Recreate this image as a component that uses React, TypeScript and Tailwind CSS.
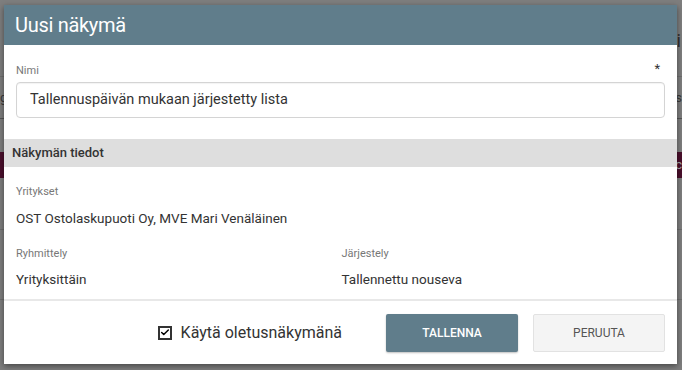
import { Check } from 'lucide-react'

export default function App() {
  return (
    <div
      className="relative w-[682px] h-[370px] overflow-hidden bg-[#7e7e7e]"
      style={{ fontFamily: 'Roboto, "Noto Sans", sans-serif' }}
    >
      {/* page under the overlay */}
      <div className="flex flex-col text-[13px] text-[#3a3a3a]">
        <div className="h-[77px] border-b border-[#6e6e6e] flex items-center justify-end pr-[1px] pt-[4px]">
          <span className="text-[18px] text-[#2e2e2e]">äi</span>
        </div>
        <div className="h-[42px] border-b border-[#555] flex items-center justify-between">
          <span>g</span>
          <span>s</span>
        </div>
        <div className="h-[33px]" />
        <div className="h-[26px] bg-[#4a0f2c] flex items-center justify-end text-[#aaa]">c</div>
        <div className="h-[52px] border-b border-[#6e6e6e]" />
        <div className="h-[70px] border-b border-[#6e6e6e]" />
      </div>

      {/* dialog */}
      <div className="absolute left-[4px] top-[5px] w-[673px] h-[359px] bg-white flex flex-col shadow-[0_2px_6px_rgba(0,0,0,0.45)]">
        <div className="h-[40px] bg-[#607d8b] flex items-center px-[11px]">
          <h2 className="text-[20px] text-white tracking-[-0.3px]">Uusi näkymä</h2>
        </div>

        <div className="px-[12px] pt-[18px]">
          <div className="flex justify-between items-start h-[19px]">
            <span className="text-[11px] text-[#777]">Nimi</span>
            <span className="text-[13px] text-[#333] mr-[5px] -mt-[4px]">*</span>
          </div>
          <div className="h-[36px] border border-[#d4d4d4] rounded-[4px] flex items-center px-[13px] text-[14.5px] text-[#333] shadow-[inset_0_1px_1px_rgba(0,0,0,0.05)]">
            Tallennuspäivän mukaan järjestetty lista
          </div>
        </div>

        <div className="mt-[21px] h-[28px] bg-[#dedede] flex items-center px-[8px] text-[13px] font-medium text-[#333]">
          Näkymän tiedot
        </div>

        <div className="px-[12px] pt-[17px] flex flex-col">
          <span className="text-[11px] text-[#777]">Yritykset</span>
          <span className="mt-[7px] text-[13.5px] text-[#333]">OST Ostolaskupuoti Oy, MVE Mari Venäläinen</span>
          <div className="mt-[18px] grid grid-cols-2">
            <div className="flex flex-col">
              <span className="text-[11px] text-[#777]">Ryhmittely</span>
              <span className="mt-[7px] text-[13.5px] text-[#333]">Yrityksittäin</span>
            </div>
            <div className="flex flex-col pl-[1px]">
              <span className="text-[11px] text-[#777]">Järjestely</span>
              <span className="mt-[7px] text-[13.5px] text-[#333]">Tallennettu nouseva</span>
            </div>
          </div>
        </div>

        <div className="mt-auto border-t-2 border-[#e8e8e8] h-[65px] flex items-center justify-end gap-[15px] pr-[12px]">
          <label className="flex items-center gap-[9px] mr-[29px]">
            <span className="w-[14px] h-[14px] border-2 border-[#333] bg-white flex items-center justify-center">
              <Check className="w-[11px] h-[11px] text-black" strokeWidth={3.5} />
            </span>
            <span className="text-[16px] text-[#333]">Käytä oletusnäkymänä</span>
          </label>
          <button className="w-[132px] h-[38px] bg-[#607d8b] text-white text-[12px] font-medium rounded-[2px] shadow-[0_1px_2px_rgba(0,0,0,0.25)]">
            TALLENNA
          </button>
          <button className="w-[132px] h-[38px] bg-[#f4f4f4] border border-[#e2e2e2] text-[#555] text-[12px] rounded-[2px]">
            PERUUTA
          </button>
        </div>
      </div>
    </div>
  )
}
